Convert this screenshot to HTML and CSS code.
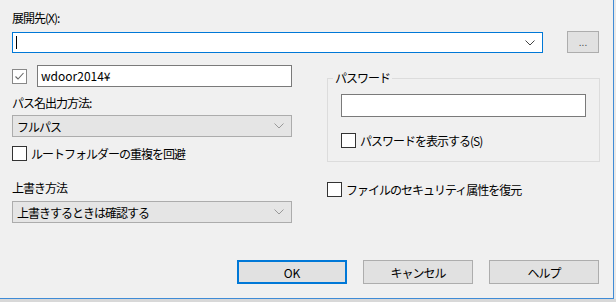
FILE: index.html
```html
<!DOCTYPE html>
<html lang="ja">
<head>
<meta charset="utf-8">
<link rel="stylesheet" href="styles.css">
</head>
<body>
<div class="dialog">
  <div class="label first">展開先(X):</div>
  <div class="dest-row">
    <div class="combo focus">
      <span class="caret"></span>
      <svg class="chev" width="10" height="6" viewBox="0 0 10 6"><polyline points="0.5,0.5 5,5 9.5,0.5" fill="none" stroke="#444" stroke-width="1"/></svg>
    </div>
    <div class="btn browse">...</div>
  </div>
  <div class="main">
    <div class="col left">
      <div class="sub-row">
        <span class="check checked"><svg width="13" height="13" viewBox="0 0 13 13"><polyline points="2.5,6.5 5,9 10.5,3" fill="none" stroke="#666" stroke-width="1.1"/></svg></span>
        <div class="textbox sub">wdoor2014¥</div>
      </div>
      <div class="label l2">パス名出力方法:</div>
      <div class="select s1"><span>フルパス</span>
        <svg class="chev" width="10" height="6" viewBox="0 0 10 6"><polyline points="0.5,0.5 5,5 9.5,0.5" fill="none" stroke="#999" stroke-width="1"/></svg>
      </div>
      <label class="cb-row r1"><span class="check"></span><span class="cb-text">ルートフォルダーの重複を回避</span></label>
      <div class="label l3">上書き方法</div>
      <div class="select s2"><span>上書きするときは確認する</span>
        <svg class="chev" width="10" height="6" viewBox="0 0 10 6"><polyline points="0.5,0.5 5,5 9.5,0.5" fill="none" stroke="#999" stroke-width="1"/></svg>
      </div>
    </div>
    <div class="col right">
      <fieldset class="group">
        <legend>パスワード</legend>
        <div class="textbox pw"></div>
        <label class="cb-row r2"><span class="check"></span><span class="cb-text">パスワードを表示する(S)</span></label>
      </fieldset>
      <label class="cb-row r3"><span class="check"></span><span class="cb-text">ファイルのセキュリティ属性を復元</span></label>
    </div>
  </div>
  <div class="footer">
    <div class="btn big ok">OK</div>
    <div class="btn big">キャンセル</div>
    <div class="btn big">ヘルプ</div>
  </div>
</div>
<div class="behind"></div>
</body>
</html>
```
FILE: styles.css
```css
html, body {
  margin: 0;
  padding: 0;
  background: #e9e9e9;
}
body {
  width: 616px;
  height: 302px;
  overflow: hidden;
  font-family: "Noto Sans CJK JP", "Noto Sans", sans-serif;
  font-size: 12px;
  color: #000;
}
.dialog {
  box-sizing: border-box;
  width: 614px;
  height: 299px;
  background: #f0f0f0;
  border-right: 1px solid #3f8bd6;
  border-bottom: 1px solid #3f8bd6;
  padding: 0 0 0 12px;
  display: flex;
  flex-direction: column;
}
.label {
  line-height: 14px;
  height: 14px;
  letter-spacing: -1px;
  white-space: nowrap;
}
.first { margin-top: 11px; }
.dest-row {
  display: flex;
  align-items: flex-start;
  margin-top: 6px;
  height: 22px;
}
.combo {
  box-sizing: border-box;
  width: 531px;
  height: 21px;
  margin-top: 1px;
  background: #fff;
  border: 1px solid #0078d7;
  position: relative;
}
.caret {
  position: absolute;
  left: 3px;
  top: 3px;
  width: 1px;
  height: 13px;
  background: #000;
}
.combo .chev {
  position: absolute;
  right: 7px;
  top: 7px;
}
.btn {
  box-sizing: border-box;
  background: #e1e1e1;
  border: 1px solid #adadad;
  display: flex;
  align-items: center;
  justify-content: center;
  white-space: nowrap;
}
.browse {
  width: 32px;
  height: 22px;
  margin-left: 24px;
  font-size: 10px;
  color: #555;
  padding-bottom: 2px;
}
.main {
  display: flex;
  height: 170px;
}
.col { display: flex; flex-direction: column; }
.left { width: 280px; }
.right { width: 273px; margin-left: 35px; }
.sub-row {
  display: flex;
  align-items: center;
  margin-top: 12px;
  height: 22px;
}
.check {
  box-sizing: border-box;
  width: 15px;
  height: 15px;
  border: 1px solid #333;
  background: #fff;
  flex: none;
  display: flex;
  align-items: center;
  justify-content: center;
}
.check.checked { border-color: #888; }
.textbox {
  box-sizing: border-box;
  background: #fff;
  border: 1px solid #7a7a7a;
}
.sub {
  width: 255px;
  height: 22px;
  margin-left: 10px;
  padding-left: 3px;
  line-height: 19px;
  font-size: 12px;
}
.l2 { margin-top: 9px; }
.select {
  box-sizing: border-box;
  width: 280px;
  height: 22px;
  background: #e5e5e5;
  border: 1px solid #acacac;
  display: flex;
  align-items: center;
  justify-content: space-between;
  padding: 0 7px 0 4px;
  letter-spacing: -1px;
}
.s1 { margin-top: 5px; }
.s2 { margin-top: 6px; }
.cb-row {
  display: flex;
  align-items: center;
  height: 17px;
  white-space: nowrap;
}
.cb-text {
  margin-left: 4px;
  letter-spacing: -1px;
}
.r1 { margin-top: 8px; }
.l3 { margin-top: 19px; }
.group {
  box-sizing: border-box;
  margin: 18px 0 0 0;
  padding: 8px 13px 0 13px;
  width: 273px;
  height: 91px;
  border: 1px solid #dcdcdc;
  display: flex;
  flex-direction: column;
  min-width: 0;
}
.group legend {
  padding: 0 2px;
  margin-left: -8px;
  letter-spacing: -1px;
  line-height: 14px;
}
.pw {
  width: 245px;
  height: 23px;
  margin-top: 1px;
}
.r2 { margin-top: 15px; }
.r3 { margin-top: 19px; }
.footer {
  display: flex;
  justify-content: flex-end;
  gap: 16px;
  padding-right: 14px;
  margin-top: 37px;
}
.big {
  width: 110px;
  height: 24px;
  letter-spacing: -1px;
}
.ok {
  border: 2px solid #0078d7;
  letter-spacing: 0;
}
.behind {
  height: 3px;
  background: #d8d8d8;
}
```
